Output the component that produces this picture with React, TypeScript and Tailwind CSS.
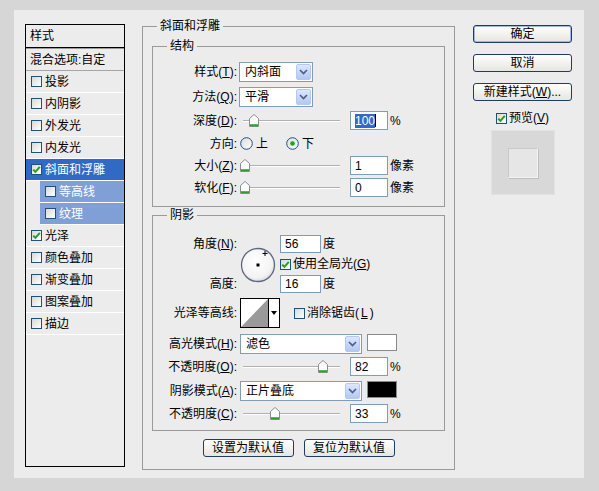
const font = "font-['Liberation_Sans','Noto_Sans_CJK_SC',sans-serif]"

function Check({ on }: { on?: boolean }) {
  return (
    <span className="w-[11px] h-[11px] shrink-0 border border-[#1c5180] bg-gradient-to-br from-[#d8d8d2] to-white flex items-center justify-center">
      {on && (
        <svg width="9" height="9" viewBox="0 0 9 9">
          <path d="M1.2 4.6 L3.4 6.8 L7.8 1.8" stroke="#21a121" strokeWidth="2" fill="none" />
        </svg>
      )}
    </span>
  )
}

function Radio({ on }: { on?: boolean }) {
  return (
    <svg width="13" height="13" viewBox="0 0 13 13" className="shrink-0">
      <defs>
        <linearGradient id="rg" x1="0" y1="0" x2="1" y2="1">
          <stop offset="0" stopColor="#dcdcd6" />
          <stop offset="1" stopColor="#ffffff" />
        </linearGradient>
      </defs>
      <circle cx="6.5" cy="6.5" r="5.8" fill="url(#rg)" stroke="#1c5180" />
      {on && <circle cx="6.5" cy="6.5" r="2.3" fill="#21a121" />}
    </svg>
  )
}

function Label({ children }: { children: React.ReactNode }) {
  return <span className="w-[84px] shrink-0 text-right whitespace-nowrap">{children}</span>
}

function Select({ text, className }: { text: string; className: string }) {
  return (
    <div className={`h-[20px] ml-[2px] border border-[#7f9db9] bg-white flex items-center ${className}`}>
      <span className="flex-1 pl-[5px]">{text}</span>
      <span className="w-[15px] h-[16px] mr-[1px] rounded-[2px] border border-[#b4c8f6] bg-gradient-to-b from-[#dde7fd] to-[#b4c7f4] flex items-center justify-center">
        <svg width="9" height="6" viewBox="0 0 9 6">
          <path d="M1 1 L4.5 4.5 L8 1" stroke="#4d6185" strokeWidth="1.7" fill="none" />
        </svg>
      </span>
    </div>
  )
}

function Slider({ pos }: { pos: number }) {
  return (
    <div className="relative w-[103px] h-[19px] ml-[2px] shrink-0">
      <div className="absolute left-[4px] right-[2px] top-[9px] h-[1px] bg-[#b0b0b0]" />
      <div className="absolute left-[4px] right-[2px] top-[10px] h-[1px] bg-white" />
      <svg className="absolute top-[3px]" style={{ left: pos - 5 }} width="10" height="13" viewBox="0 0 10 13">
        <path d="M0.5 4.5 L5 0.5 L9.5 4.5 L9.5 12.5 L0.5 12.5 Z" fill="#ffffff" stroke="#8d8d8d" />
        <path d="M1 11.2 H9" stroke="#2da32d" strokeWidth="2" />
      </svg>
    </div>
  )
}

function NumBox({ children, className = 'w-[38px] h-[19px] ml-[8px]' }: { children: React.ReactNode; className?: string }) {
  return (
    <div className={`shrink-0 border border-[#7f9db9] bg-white flex items-center pl-[4px] ${className}`}>{children}</div>
  )
}

function Btn({ children, main }: { children: React.ReactNode; main?: boolean }) {
  return (
    <div
      className={`h-[18px] w-full rounded-[3px] border border-[#1d3c66] bg-gradient-to-b from-white to-[#e6e5df] flex items-center justify-center ${
        main ? 'shadow-[inset_0_0_0_1px_#9fb8e6]' : ''
      }`}
    >
      {children}
    </div>
  )
}

const items = [
  { t: '投影' },
  { t: '内阴影' },
  { t: '外发光' },
  { t: '内发光' },
  { t: '斜面和浮雕', on: true, sel: true },
  { t: '等高线', sub: true },
  { t: '纹理', sub: true },
  { t: '光泽', on: true },
  { t: '颜色叠加' },
  { t: '渐变叠加' },
  { t: '图案叠加' },
  { t: '描边' },
]

function StyleList() {
  return (
    <div className="ml-[11px] mt-[14px] w-[100px] h-[443px] border border-black bg-[#ececec] flex flex-col">
      <div className="h-[23px] pl-[4px] flex items-center border-b border-black">样式</div>
      <div className="h-[1px] bg-[#9a9a9a]" />
      <div className="h-[22px] pl-[4px] flex items-center border-b border-[#a5a5a5]">混合选项:自定</div>
      {items.map((it) => (
        <div
          key={it.t}
          className={`h-[22px] flex items-center gap-[3px] border-b border-white ${
            it.sel ? 'bg-[#316ac5] text-white pl-[5px]' : it.sub ? 'ml-[14px] bg-[#7f9fd6] text-white pl-[5px]' : 'pl-[5px]'
          }`}
        >
          <Check on={it.on} />
          <span>{it.t}</span>
        </div>
      ))}
    </div>
  )
}

function Dial() {
  return (
    <svg width="36" height="36" viewBox="0 0 36 36" className="mt-[12px] ml-[3px] shrink-0">
      <defs>
        <radialGradient id="dg" cx="0.45" cy="0.4" r="0.6">
          <stop offset="0" stopColor="#ffffff" />
          <stop offset="0.8" stopColor="#f3f3f3" />
          <stop offset="1" stopColor="#dcdcdc" />
        </radialGradient>
      </defs>
      <circle cx="18" cy="18" r="16.5" fill="url(#dg)" stroke="#5e6682" strokeWidth="1.3" />
      <rect x="16.5" y="16.5" width="3" height="3" fill="#000" />
      <path d="M25 4 V9 M22.5 6.5 H27.5" stroke="#000" strokeWidth="1" />
    </svg>
  )
}

function Contour() {
  return (
    <div className="ml-[3px] w-[40px] h-[30px] border border-black bg-white flex">
      <svg width="27" height="28" viewBox="0 0 27 28" className="shrink-0">
        <path d="M0 28 L27 0 L27 28 Z" fill="#9a9a9a" />
      </svg>
      <div className="flex-1 border-l border-black flex items-center justify-center">
        <svg width="6" height="4" viewBox="0 0 6 4">
          <path d="M0 0 H6 L3 4 Z" fill="#000" />
        </svg>
      </div>
    </div>
  )
}

export default function App() {
  return (
    <div className={`w-[599px] h-[491px] bg-[#d6d6d6] overflow-hidden pt-[10px] pl-[14px] text-[12px] leading-[14px] text-black ${font}`}>
      <div className="w-[570px] h-[468px] bg-[#ececec] flex items-start">
        <StyleList />

        <fieldset className="ml-[17px] mt-[9px] w-[313px] border border-[#9a9a9a] px-[9px] pb-[12px]">
          <legend className="ml-[5px] px-[3px] leading-[14px]">斜面和浮雕</legend>

          <fieldset className="mt-[6px] border border-[#9a9a9a] pt-[9px] pb-[9px]">
            <legend className="ml-[14px] px-[3px] leading-[14px]">结构</legend>
            <div className="flex items-center h-[20px]">
              <Label>样式(<u>T</u>):</Label>
              <Select text="内斜面" className="w-[74px]" />
            </div>
            <div className="flex items-center h-[20px] mt-[5px]">
              <Label>方法(<u>Q</u>):</Label>
              <Select text="平滑" className="w-[74px]" />
            </div>
            <div className="flex items-center h-[19px] mt-[4px]">
              <Label>深度(<u>D</u>):</Label>
              <Slider pos={15} />
              <NumBox>
                <span className="bg-[#316ac5] text-white">100</span>
                <span className="w-[1px] h-[13px] bg-black" />
              </NumBox>
              <span className="ml-[2px]">%</span>
            </div>
            <div className="flex items-center h-[19px] mt-[4px]">
              <Label>方向:</Label>
              <span className="ml-[3px] flex items-center gap-[3px]">
                <Radio />上
              </span>
              <span className="ml-[18px] flex items-center gap-[3px]">
                <Radio on />下
              </span>
            </div>
            <div className="flex items-center h-[19px] mt-[3px]">
              <Label>大小(<u>Z</u>):</Label>
              <Slider pos={6} />
              <NumBox>1</NumBox>
              <span className="ml-[2px]">像素</span>
            </div>
            <div className="flex items-center h-[19px] mt-[3px]">
              <Label>软化(<u>F</u>):</Label>
              <Slider pos={6} />
              <NumBox>0</NumBox>
              <span className="ml-[2px]">像素</span>
            </div>
          </fieldset>

          <fieldset className="mt-[1px] border border-[#9a9a9a] pt-[13px] pb-[7px]">
            <legend className="ml-[14px] px-[3px] leading-[14px]">阴影</legend>
            <div className="flex items-start h-[58px]">
              <div className="w-[84px] h-[58px] shrink-0 flex flex-col justify-between text-right">
                <span className="h-[18px] flex items-center justify-end">角度(<u>N</u>):</span>
                <span className="h-[18px] flex items-center justify-end">高度:</span>
              </div>
              <Dial />
              <div className="ml-[4px] flex flex-col">
                <div className="flex items-center h-[18px]">
                  <NumBox className="w-[41px] h-[18px]">56</NumBox>
                  <span className="ml-[2px]">度</span>
                </div>
                <div className="flex items-center h-[22px] gap-[2px]">
                  <Check on />
                  <span>使用全局光(<u>G</u>)</span>
                </div>
                <div className="flex items-center h-[18px]">
                  <NumBox className="w-[41px] h-[18px]">16</NumBox>
                  <span className="ml-[2px]">度</span>
                </div>
              </div>
            </div>
            <div className="flex items-center h-[30px] mt-[5px]">
              <Label>光泽等高线:</Label>
              <Contour />
              <span className="ml-[14px] flex items-center gap-[2px]">
                <Check />
                消除锯齿(<u>L</u>)
              </span>
            </div>
            <div className="flex items-center h-[20px] mt-[6px]">
              <Label>高光模式(<u>H</u>):</Label>
              <Select text="滤色" className="w-[122px] ml-[3px]" />
              <span className="ml-[5px] w-[30px] h-[17px] border border-[#8a8a8a] bg-white self-start" />
            </div>
            <div className="flex items-center h-[19px] mt-[3px]">
              <Label>不透明度(<u>O</u>):</Label>
              <Slider pos={84} />
              <NumBox>82</NumBox>
              <span className="ml-[2px]">%</span>
            </div>
            <div className="flex items-center h-[20px] mt-[5px]">
              <Label>阴影模式(<u>A</u>):</Label>
              <Select text="正片叠底" className="w-[122px] ml-[3px]" />
              <span className="ml-[5px] w-[30px] h-[17px] border border-[#8a8a8a] bg-black self-start" />
            </div>
            <div className="flex items-center h-[19px] mt-[3px]">
              <Label>不透明度(<u>C</u>):</Label>
              <Slider pos={36} />
              <NumBox>33</NumBox>
              <span className="ml-[2px]">%</span>
            </div>
          </fieldset>

          <div className="mt-[8px] flex justify-center gap-[10px]">
            <div className="w-[91px]">
              <Btn>设置为默认值</Btn>
            </div>
            <div className="w-[91px]">
              <Btn>复位为默认值</Btn>
            </div>
          </div>
        </fieldset>

        <div className="ml-[18px] mt-[15px] w-[99px] flex flex-col items-center">
          <Btn main>确定</Btn>
          <div className="h-[11px]" />
          <Btn>取消</Btn>
          <div className="h-[11px]" />
          <Btn>
            新建样式(<u>W</u>)...
          </Btn>
          <div className="mt-[10px] h-[14px] flex items-center gap-[2px]">
            <Check on />
            <span>预览(<u>V</u>)</span>
          </div>
          <div className="mt-[5px] w-[64px] h-[65px] bg-[#d8d8d8] border border-[#e2e2e2] flex items-center justify-center">
            <div className="w-[30px] h-[30px] bg-[#e6e6e6] border-t border-l border-[#c9c9c9] border-b border-r border-b-[#f4f4f4] border-r-[#f4f4f4] shadow-[1px_1px_0_#bdbdbd]" />
          </div>
        </div>
      </div>
    </div>
  )
}
